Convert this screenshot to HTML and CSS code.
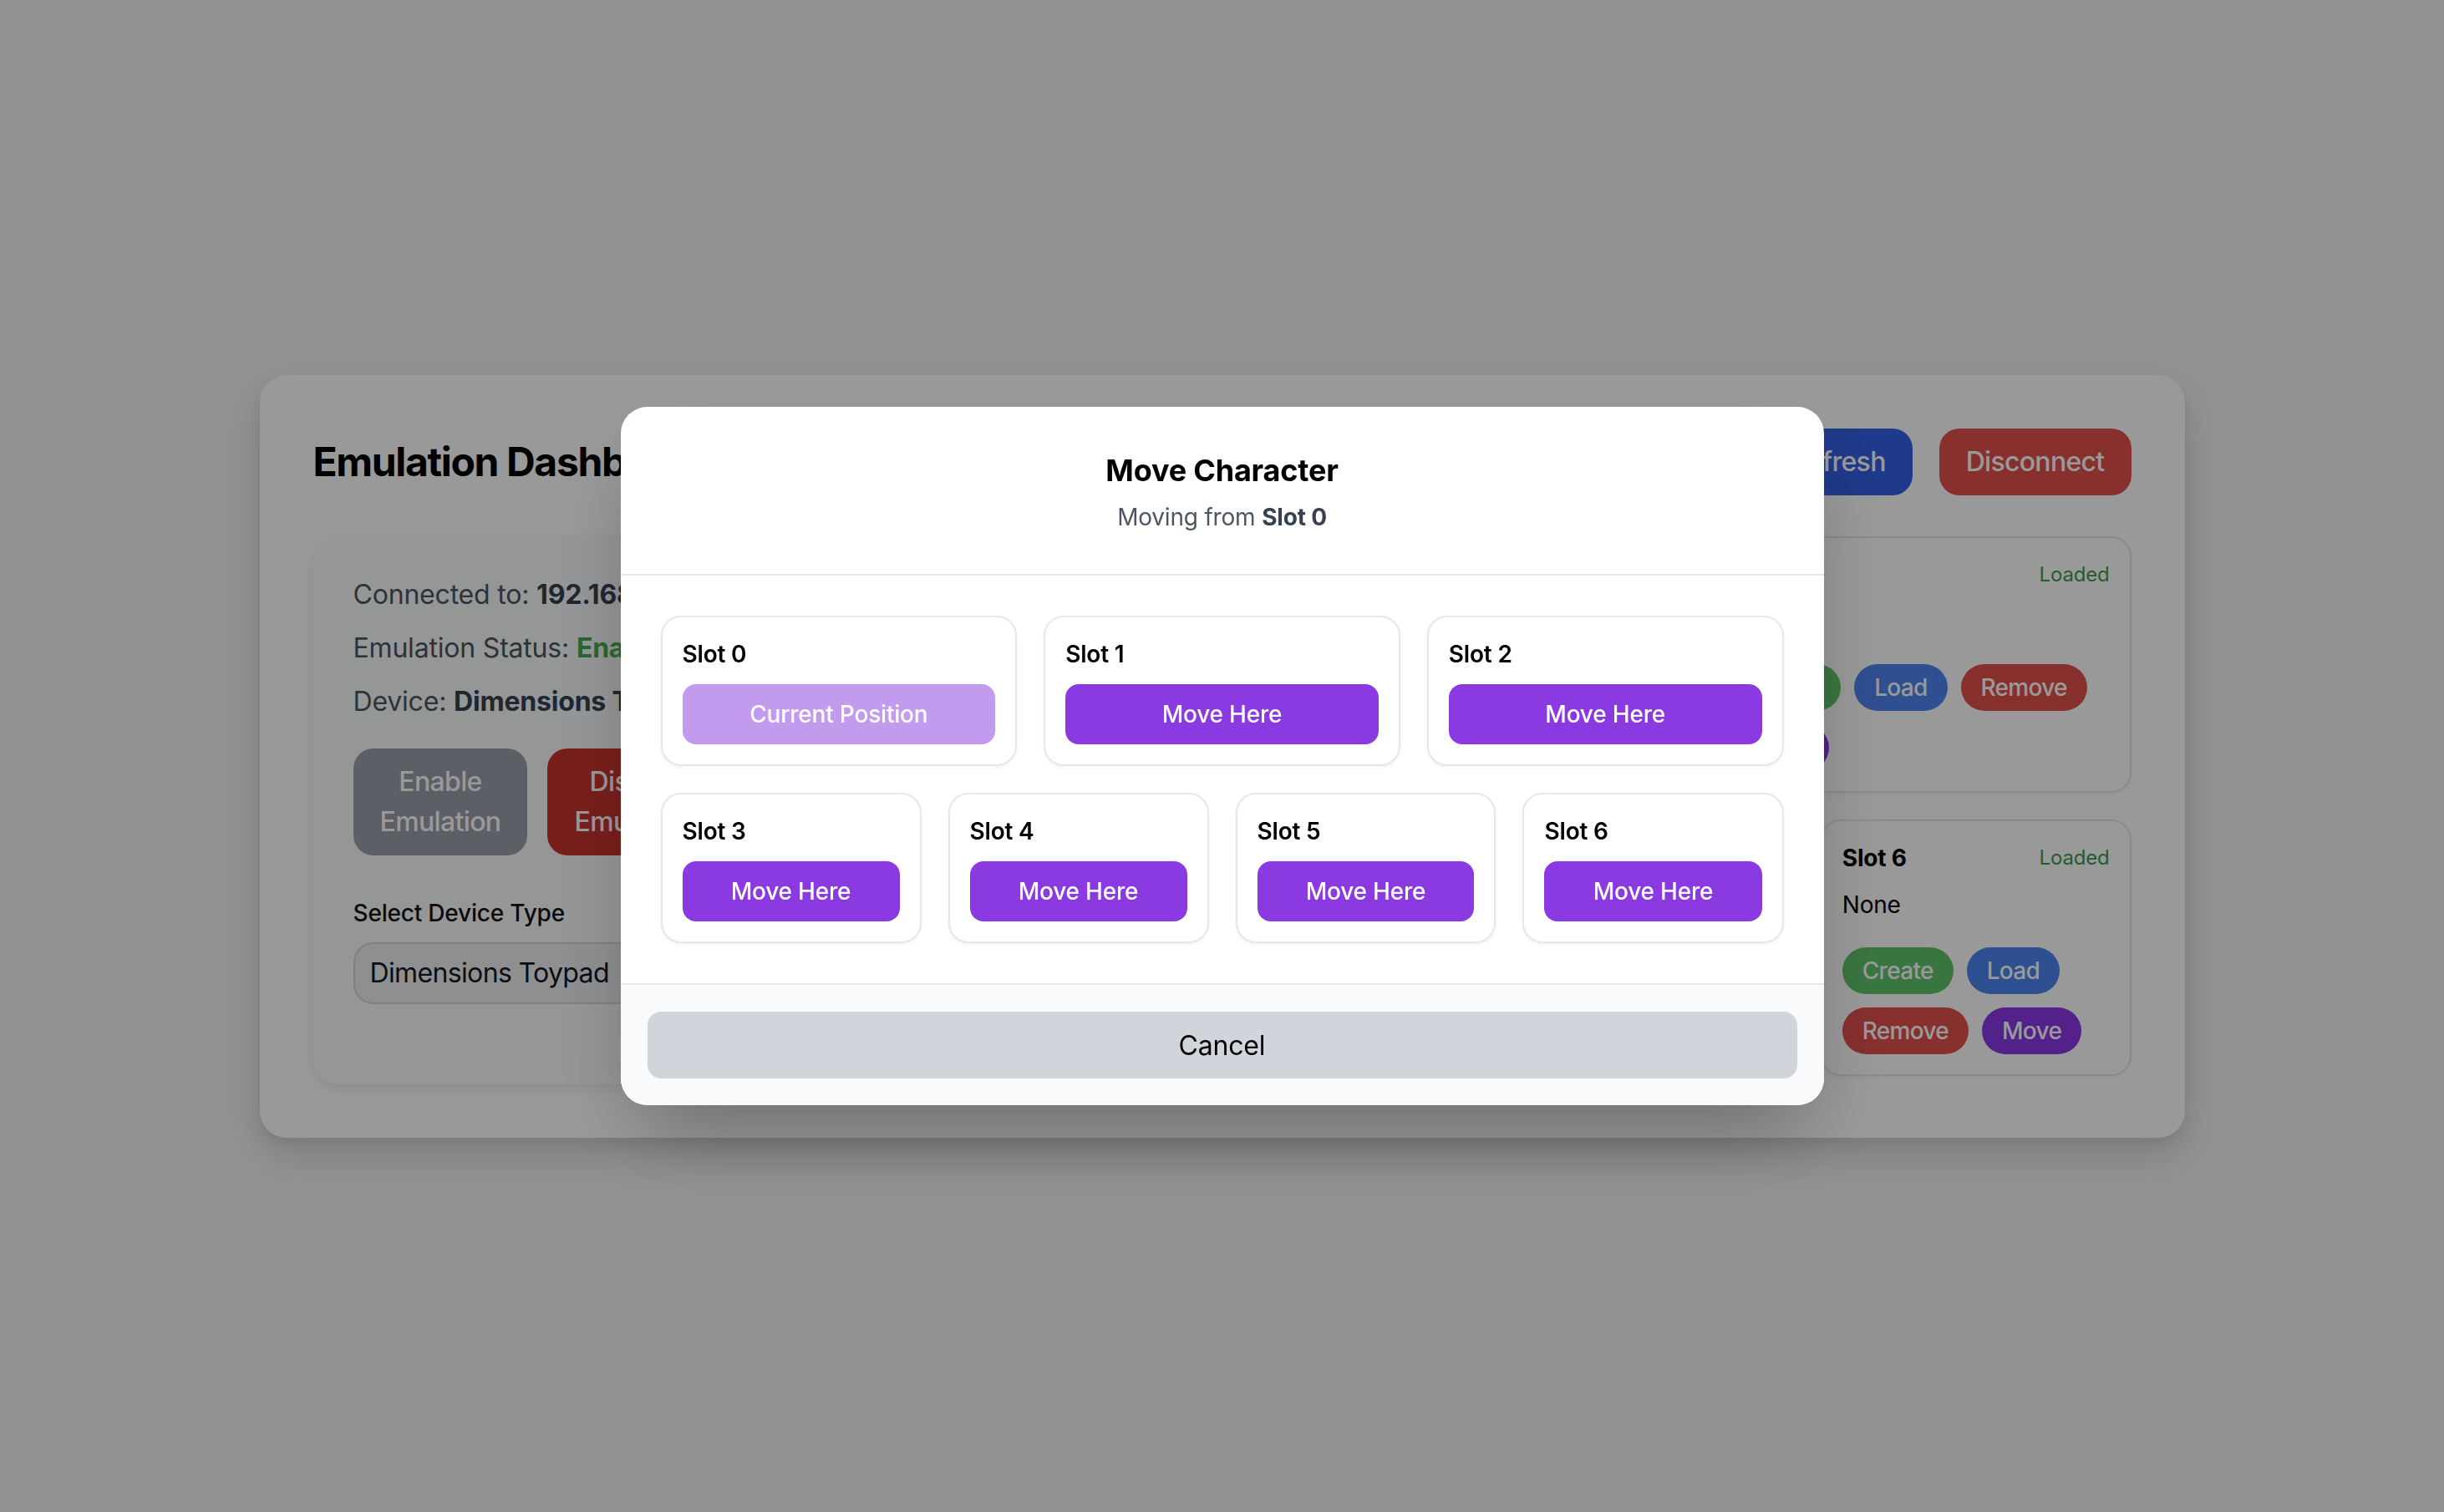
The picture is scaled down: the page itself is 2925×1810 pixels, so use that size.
FILE: index.html
```html
<!DOCTYPE html>
<html lang="en">
<head>
<meta charset="utf-8">
<title>Emulation Dashboard</title>
<link rel="stylesheet" href="styles.css">
</head>
<body>
<main class="dash">
  <header class="dash-head">
    <h1 class="dash-title">Emulation Dashboard</h1>
    <div class="head-actions">
      <button class="btn-lg btn-blue">Refresh</button>
      <button class="btn-lg btn-red">Disconnect</button>
    </div>
  </header>
  <div class="dash-grid">
    <section class="panel">
      <div class="info">
        <p class="info-line">Connected to: <b>192.168.1.42</b></p>
        <p class="info-line">Emulation Status: <b class="ok">Enabled</b></p>
        <p class="info-line">Device: <b>Dimensions Toypad</b></p>
      </div>
      <div class="emu-actions">
        <button class="btn-emu btn-gray">Enable Emulation</button>
        <button class="btn-emu btn-darkred">Disable Emulation</button>
      </div>
      <label class="field-label">Select Device Type</label>
      <div class="select">Dimensions Toypad</div>
    </section>
    <section class="slots">
      <div class="slot wide">
        <div class="slot-top"><span class="slot-name">Slot 0</span><span class="loaded">Loaded</span></div>
        <p class="slot-char">None</p>
        <div class="slot-actions"><button class="btn-sm green">Create</button><button class="btn-sm blue">Load</button><button class="btn-sm red">Remove</button><button class="btn-sm purple">Move</button></div>
      </div>
      <div class="slot wide">
        <div class="slot-top"><span class="slot-name">Slot 1</span><span class="loaded">Loaded</span></div>
        <p class="slot-char">None</p>
        <div class="slot-actions"><button class="btn-sm green">Create</button><button class="btn-sm blue">Load</button><button class="btn-sm red">Remove</button><button class="btn-sm purple">Move</button></div>
      </div>
      <div class="slot wide">
        <div class="slot-top"><span class="slot-name">Slot 2</span><span class="loaded">Loaded</span></div>
        <p class="slot-char">None</p>
        <div class="slot-actions"><button class="btn-sm green">Create</button><button class="btn-sm blue">Load</button><button class="btn-sm red">Remove</button><button class="btn-sm purple">Move</button></div>
      </div>
      <div class="slot narrow">
        <div class="slot-top"><span class="slot-name">Slot 3</span><span class="loaded">Loaded</span></div>
        <p class="slot-char">None</p>
        <div class="slot-actions"><button class="btn-sm green">Create</button><button class="btn-sm blue">Load</button><button class="btn-sm red">Remove</button><button class="btn-sm purple">Move</button></div>
      </div>
      <div class="slot narrow">
        <div class="slot-top"><span class="slot-name">Slot 4</span><span class="loaded">Loaded</span></div>
        <p class="slot-char">None</p>
        <div class="slot-actions"><button class="btn-sm green">Create</button><button class="btn-sm blue">Load</button><button class="btn-sm red">Remove</button><button class="btn-sm purple">Move</button></div>
      </div>
      <div class="slot narrow">
        <div class="slot-top"><span class="slot-name">Slot 5</span><span class="loaded">Loaded</span></div>
        <p class="slot-char">None</p>
        <div class="slot-actions"><button class="btn-sm green">Create</button><button class="btn-sm blue">Load</button><button class="btn-sm red">Remove</button><button class="btn-sm purple">Move</button></div>
      </div>
      <div class="slot narrow">
        <div class="slot-top"><span class="slot-name">Slot 6</span><span class="loaded">Loaded</span></div>
        <p class="slot-char">None</p>
        <div class="slot-actions"><button class="btn-sm green">Create</button><button class="btn-sm blue">Load</button><button class="btn-sm red">Remove</button><button class="btn-sm purple">Move</button></div>
      </div>
    </section>
  </div>
</main>

<div class="overlay">
  <div class="modal">
    <div class="modal-head">
      <h2 class="modal-title">Move Character</h2>
      <p class="modal-sub">Moving from <strong>Slot 0</strong></p>
    </div>
    <div class="modal-body">
      <div class="target wide">
        <div class="target-name">Slot 0</div>
        <button class="target-btn current">Current Position</button>
      </div>
      <div class="target wide">
        <div class="target-name">Slot 1</div>
        <button class="target-btn">Move Here</button>
      </div>
      <div class="target wide">
        <div class="target-name">Slot 2</div>
        <button class="target-btn">Move Here</button>
      </div>
      <div class="target narrow">
        <div class="target-name">Slot 3</div>
        <button class="target-btn">Move Here</button>
      </div>
      <div class="target narrow">
        <div class="target-name">Slot 4</div>
        <button class="target-btn">Move Here</button>
      </div>
      <div class="target narrow">
        <div class="target-name">Slot 5</div>
        <button class="target-btn">Move Here</button>
      </div>
      <div class="target narrow">
        <div class="target-name">Slot 6</div>
        <button class="target-btn">Move Here</button>
      </div>
    </div>
    <div class="modal-foot">
      <button class="cancel-btn">Cancel</button>
    </div>
  </div>
</div>
</body>
</html>
```

FILE: styles.css
```css
* { box-sizing: border-box; }

html, body { margin: 0; padding: 0; }

body {
  font-family: Inter, "Noto Sans", "Liberation Sans", sans-serif;
  letter-spacing: -0.012em;
  background: #f3f4f6;
  min-height: 100vh;
  display: flex;
  align-items: center;
  justify-content: center;
  color: #111827;
}

button {
  font-family: inherit;
  letter-spacing: inherit;
  border: none;
  cursor: pointer;
}

/* ---------- dashboard (behind) ---------- */
.dash {
  width: 2304px;
  background: #ffffff;
  border-radius: 32px;
  padding: 64px;
  box-shadow: 0 20px 50px rgba(0, 0, 0, 0.14), 0 8px 16px rgba(0, 0, 0, 0.06);
}

.dash-head {
  display: flex;
  align-items: center;
  justify-content: space-between;
  height: 80px;
  margin-bottom: 49px;
}

.dash-title {
  margin: 0;
  font-size: 48px;
  line-height: 64px;
  font-weight: 700;
  letter-spacing: -0.028em;
  color: #000;
}

.head-actions {
  display: flex;
  gap: 32px;
}

.btn-lg {
  height: 80px;
  padding: 0 32px;
  border-radius: 24px;
  font-size: 32px;
  font-weight: 500;
  letter-spacing: -0.022em;
  color: #fff;
}

.btn-blue { background: #3561e6; }
.btn-red { background: #e1504e; }

.dash-grid {
  display: grid;
  grid-template-columns: 561px 1fr;
  gap: 32px;
  align-items: start;
}

.panel {
  background: #f9fafb;
  border-radius: 32px;
  padding: 46px 48px 48px;
  box-shadow: 0 6px 16px rgba(0, 0, 0, 0.08);
}

.info {
  display: flex;
  flex-direction: column;
  gap: 16px;
}

.info-line {
  margin: 0;
  font-size: 32px;
  line-height: 48px;
  color: #4b5563;
  white-space: nowrap;
}

.info-line b { color: #374151; font-weight: 700; }
.info-line b.ok { color: #45ab52; }

.emu-actions {
  display: flex;
  gap: 24px;
  margin-top: 32px;
}

.btn-emu {
  width: min-content;
  padding: 16px 32px;
  border-radius: 24px;
  font-size: 32px;
  line-height: 48px;
  font-weight: 500;
  letter-spacing: -0.02em;
  color: #fff;
}

.btn-gray { background: #999eaa; }
.btn-darkred { background: #c8352f; }

.field-label {
  display: block;
  margin-top: 49px;
  margin-bottom: 15px;
  font-size: 28px;
  line-height: 40px;
  font-weight: 500;
  color: #111;
}

.select {
  height: 74px;
  padding: 0 18px;
  border: 2px solid #d1d5db;
  border-radius: 24px;
  background: #eeeff1;
  font-size: 32px;
  line-height: 70px;
  letter-spacing: -0.02em;
  color: #111827;
  margin-bottom: 48px;
}

.slots {
  display: grid;
  grid-template-columns: repeat(12, 1fr);
  column-gap: 32px;
  row-gap: 32px;
}

.slot {
  background: #fff;
  border: 2px solid #e5e7eb;
  border-radius: 24px;
  padding: 24px;
  box-shadow: 0 2px 4px rgba(0, 0, 0, 0.04);
}

.slot.wide { grid-column: span 4; }
.slot.narrow { grid-column: span 3; }

.slot-top {
  display: flex;
  align-items: center;
  justify-content: space-between;
  height: 40px;
}

.slot-name {
  font-size: 28px;
  font-weight: 700;
  color: #000;
}

.loaded {
  font-size: 24px;
  color: #3f9a4f;
}

.slot-char {
  margin: 16px 0 0;
  font-size: 28px;
  line-height: 40px;
  color: #000;
}

.slot-actions {
  display: flex;
  flex-wrap: wrap;
  gap: 16px;
  margin-top: 31px;
}

.btn-sm {
  height: 56px;
  padding: 0 24px;
  border-radius: 28px;
  font-size: 28px;
  font-weight: 500;
  letter-spacing: -0.025em;
  color: #fff;
}

.btn-sm.green { background: #60c46b; }
.btn-sm.blue { background: #4e84f0; }
.btn-sm.red { background: #e1504e; }
.btn-sm.purple { background: #8937e6; }

/* ---------- modal ---------- */
.overlay {
  position: fixed;
  inset: 0;
  background: rgba(0, 0, 0, 0.4);
  display: flex;
  align-items: center;
  justify-content: center;
}

.modal {
  width: 1440px;
  background: #fff;
  border-radius: 32px;
  overflow: hidden;
  box-shadow: 0 50px 100px -24px rgba(0, 0, 0, 0.3);
}

.modal-head {
  padding: 48px;
  text-align: center;
  border-bottom: 2px solid #e5e7eb;
}

.modal-title {
  margin: 0;
  font-size: 36px;
  line-height: 56px;
  font-weight: 700;
  color: #000;
}

.modal-sub {
  margin: 8px 0 0;
  font-size: 28px;
  line-height: 40px;
  color: #4b5563;
}

.modal-sub strong { color: #374151; font-weight: 700; }

.modal-body {
  padding: 48px;
  display: grid;
  grid-template-columns: repeat(12, 1fr);
  gap: 32px;
}

.target {
  border: 2px solid #e5e7eb;
  border-radius: 24px;
  padding: 24px;
  background: #fff;
  box-shadow: 0 2px 4px rgba(0, 0, 0, 0.05);
}

.target.wide { grid-column: span 4; }
.target.narrow { grid-column: span 3; }

.target-name {
  font-size: 28px;
  line-height: 40px;
  font-weight: 600;
  color: #000;
  margin-bottom: 16px;
}

.target-btn {
  display: block;
  width: 100%;
  height: 72px;
  border-radius: 16px;
  background: #8a3ae0;
  color: #fff;
  font-size: 28px;
  font-weight: 500;
}

.target-btn.current { background: #c29bef; }

.modal-foot {
  background: #f9fafb;
  border-top: 2px solid #e5e7eb;
  padding: 32px;
}

.cancel-btn {
  display: block;
  width: 100%;
  height: 80px;
  border-radius: 16px;
  background: #d1d5db;
  color: #000;
  font-size: 32px;
  font-weight: 400;
}
```
